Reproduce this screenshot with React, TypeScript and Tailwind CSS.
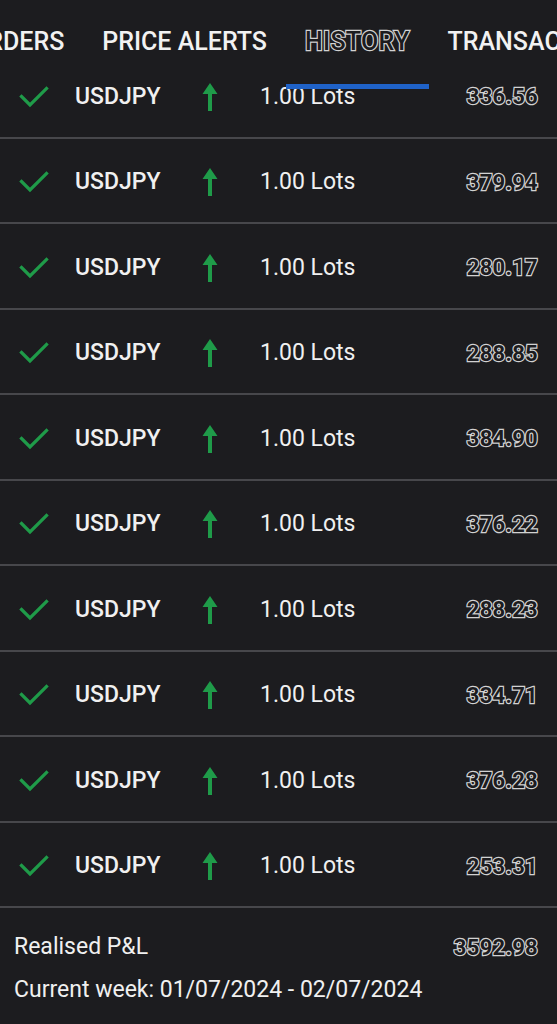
import React from 'react';

const trades = ['336.56', '379.94', '280.17', '288.85', '384.90', '376.22', '288.23', '334.71', '376.28', '253.31'];

// hollow look: light stroke painted under a dark fill
const hollow = 'text-[#1c1c1f] [-webkit-text-stroke:2.4px_#d2d2d2] [paint-order:stroke_fill] tracking-[0.3px]';
const outline = `font-bold ${hollow}`;

function Check() {
  return (
    <svg width="30" height="24" viewBox="0 0 30 24" fill="none">
      <path d="M2.5 11.5 L11 20 L27.5 3.5" stroke="#1f9b49" strokeWidth="3.2" strokeLinecap="square" />
    </svg>
  );
}

function UpArrow() {
  return (
    <svg width="16" height="28" viewBox="0 0 16 28" fill="#1f9b49">
      <path d="M8 0 L15.5 11 L10 11 L10 28 L6 28 L6 11 L0.5 11 Z" />
    </svg>
  );
}

function Tabs() {
  const tabs = ['ORDERS', 'PRICE ALERTS', 'HISTORY', 'TRANSACTIONS'];
  return (
    <div className="absolute top-0 left-0 right-0 h-[89px] overflow-hidden">
      <div className="flex h-full ml-[-49px] whitespace-nowrap">
        {tabs.map((t) => {
          const active = t === 'HISTORY';
          return (
            <div key={t} className="relative flex items-center h-full px-[19px] pb-[5px]">
              <span className={`text-[25px] font-medium ${active ? hollow : 'text-[#f2f2f2]'}`}>{t}</span>
              {active && <div className="absolute left-0 right-0 bottom-0 h-[5px] bg-[#1f62c8]" />}
            </div>
          );
        })}
      </div>
    </div>
  );
}

export default function App() {
  return (
    <div className="relative h-[1024px] w-full overflow-hidden bg-[#1c1c1f] font-[Roboto] text-[#f0f0f0]">
      <div className="pt-[53px]">
        {trades.map((v, i) => (
          <div key={i} className="flex items-center h-[85.5px] pt-[4px] border-b-2 border-[#47474b]">
            <div className="w-[75px] pl-[19px] flex items-center">
              <Check />
            </div>
            <span className="w-[127px] text-[23px] font-medium">USDJPY</span>
            <div className="w-[58px] flex items-center">
              <UpArrow />
            </div>
            <span className="text-[23px]">1.00 Lots</span>
            <span className={`ml-auto mr-[19px] text-[22px] ${outline}`}>{v}</span>
          </div>
        ))}
      </div>
      <div className="px-[14px] pt-[22px]">
        <div className="flex items-center justify-between">
          <span className="text-[23px]">Realised P&amp;L</span>
          <span className={`mr-[5px] text-[22px] ${outline}`}>3592.98</span>
        </div>
        <div className="mt-[8px] text-[23px]">Current week: 01/07/2024 - 02/07/2024</div>
      </div>
      <Tabs />
    </div>
  );
}
